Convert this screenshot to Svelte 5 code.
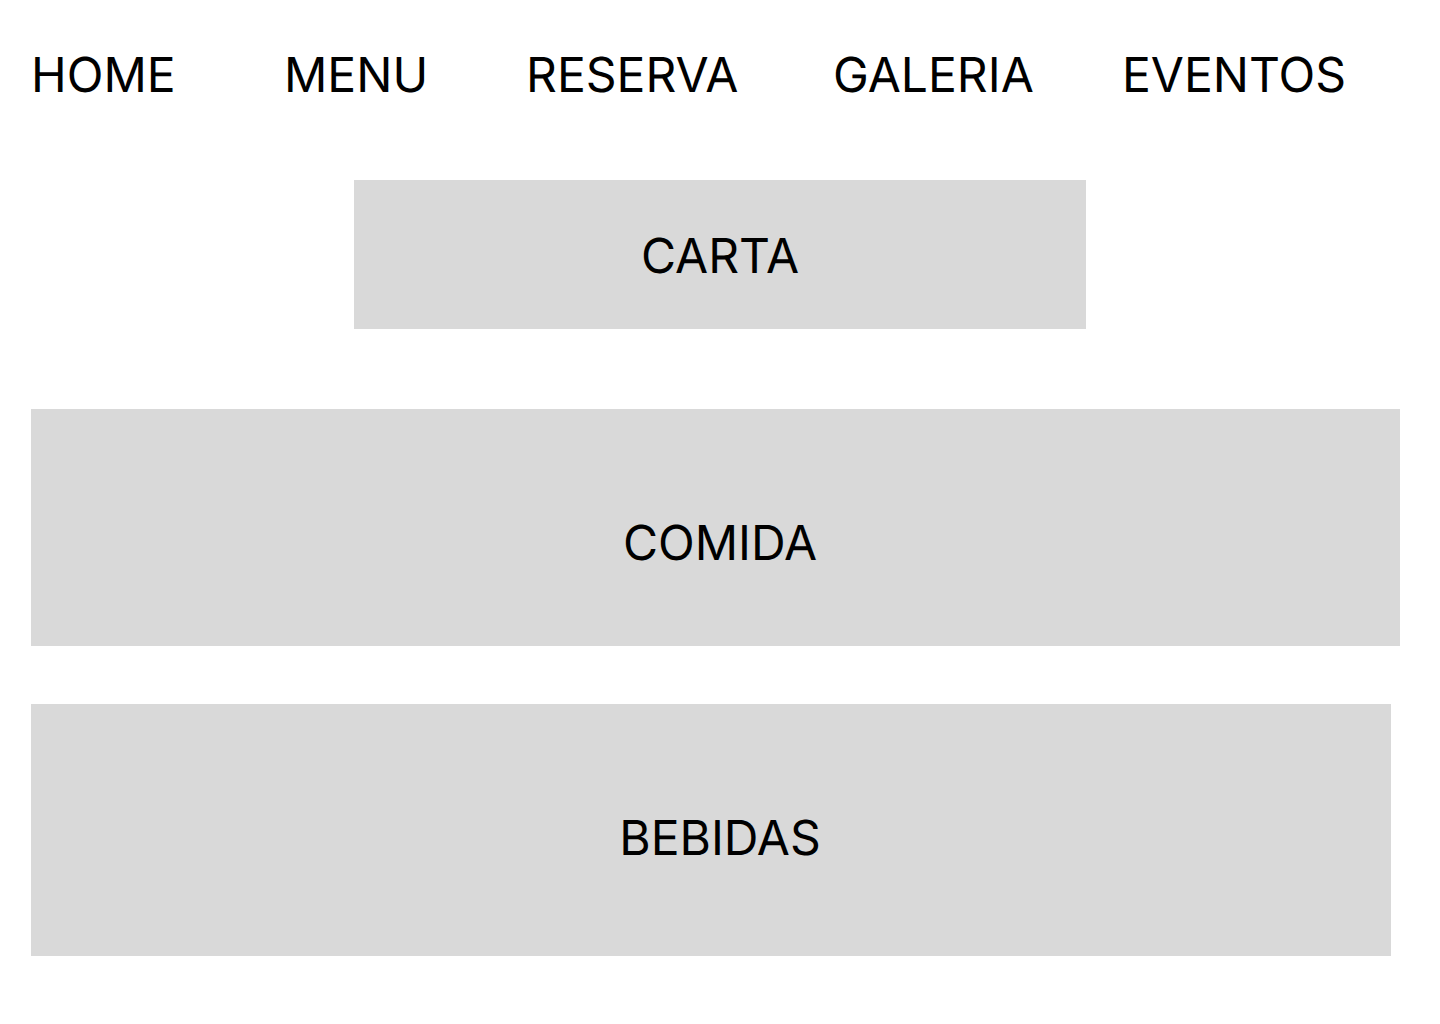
<script>
  const links = ['HOME', 'MENU', 'RESERVA', 'GALERIA', 'EVENTOS'];
</script>

<div class="page">
  <nav aria-label="Principal">
    {#each links as link}
      <a href={'#' + link.toLowerCase()}>{link}</a>
    {/each}
  </nav>

  <main>
    <h1 class="panel title">CARTA</h1>
    <section class="panel food" id="comida"><h2>COMIDA</h2></section>
    <section class="panel drinks" id="bebidas"><h2>BEBIDAS</h2></section>
  </main>
</div>

<style>
  :global(body) {
    margin: 0;
    background: #fff;
  }

  .page {
    padding: 46px 40px 68px 31px;
    color: #000;
    font-family: Inter, 'Liberation Sans', sans-serif;
    font-size: 48px;
    font-weight: 400;
    line-height: 58px;
    text-rendering: geometricPrecision;
  }

  nav {
    display: grid;
    grid-template-columns: 253fr 242fr 307fr 289fr 278fr;
  }

  a {
    color: inherit;
    text-decoration: none;
  }

  main {
    display: flex;
    flex-direction: column;
    margin-top: 76px;
  }

  h1,
  h2 {
    margin: 0;
    font-size: inherit;
    font-weight: inherit;
  }

  .panel {
    background: #d9d9d9;
    text-align: center;
  }

  .title {
    margin: 0 314px 80px 323px;
    padding: 47px 0 44px;
  }

  /* The left padding keeps each heading on the page's centre line. */
  .food {
    margin-bottom: 58px;
    padding: 105px 0 74px 9px;
  }

  .drinks {
    margin-right: 9px;
    padding: 105px 0 89px 18px;
  }
</style>
